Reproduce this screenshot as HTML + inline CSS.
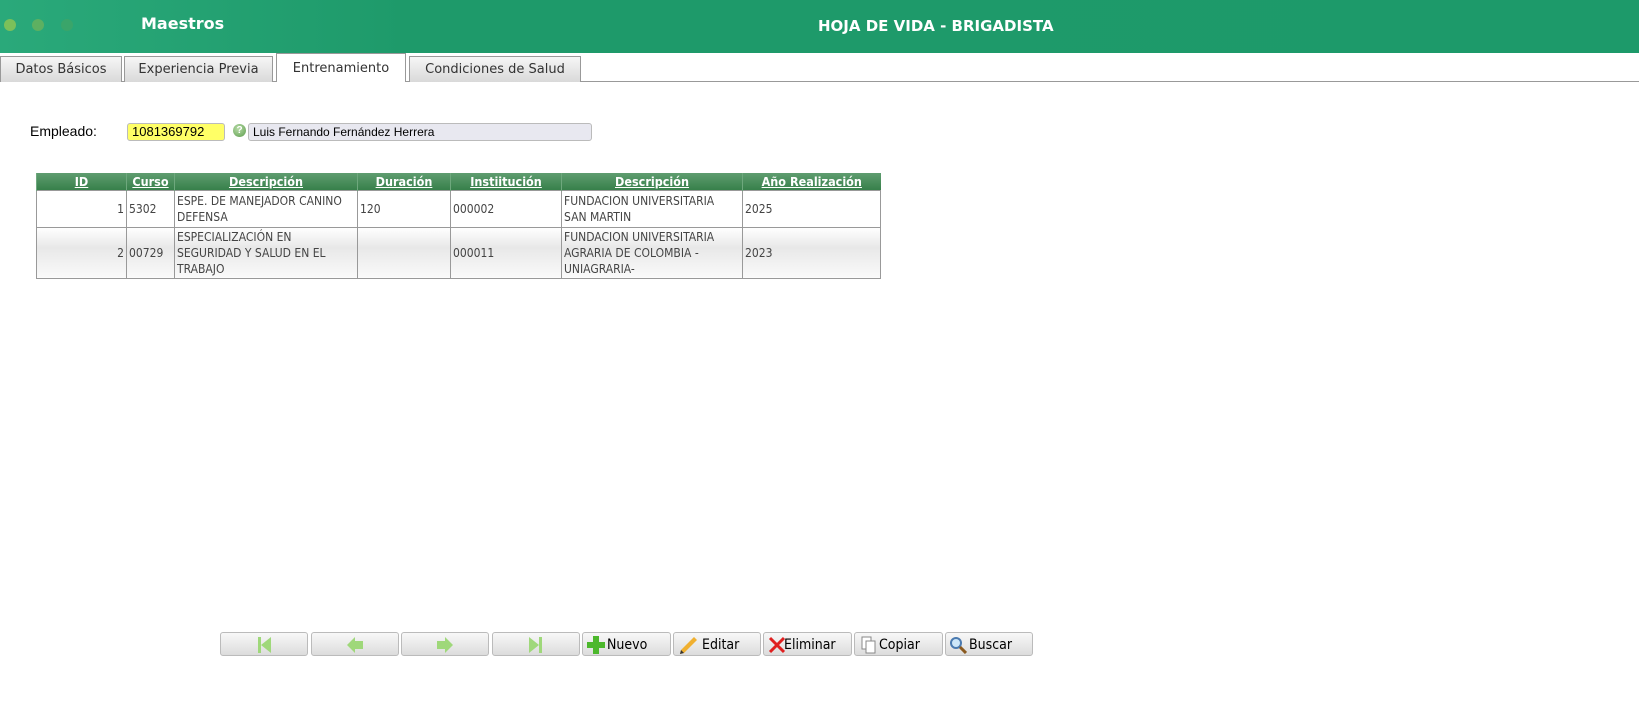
<!DOCTYPE html>
<html><head><meta charset="utf-8"><style>
*{box-sizing:border-box;margin:0;padding:0}
body{width:1639px;height:712px;background:#fff;font-family:"Liberation Sans",sans-serif;position:relative;overflow:hidden}
.hdr{position:absolute;left:0;top:0;width:1639px;height:53px;background:linear-gradient(90deg,#2aa97a 0%,#1e9a6a 25%,#1d9a6a 100%)}
.dot{position:absolute;top:19px;width:12px;height:12px;border-radius:50%}
.hdr .t1{position:absolute;left:141px;top:14px;color:#fff;font-weight:bold;font-size:16px;font-family:"DejaVu Sans",sans-serif}
.hdr .t2{position:absolute;left:818px;top:17px;color:#fff;font-weight:bold;font-size:15px;font-family:"DejaVu Sans",sans-serif}
.tabline{position:absolute;left:0;top:81px;width:1639px;height:1px;background:#999}
.tab{position:absolute;top:56px;height:26px;border:1px solid #999;border-bottom:none;background:linear-gradient(#f6f6f6,#d9d9d9);font-family:"DejaVu Sans",sans-serif;font-size:13px;color:#333;text-align:center;line-height:25px}
.tab.act{top:53px;height:29px;background:#fff;line-height:30px}
.lbl{position:absolute;left:30px;top:123px;font-size:14px}
.inp1{position:absolute;left:127px;top:123px;width:98px;height:18px;background:#ffff66;border:1px solid #bbb;border-radius:3px;font-size:13px;padding-left:4px;line-height:16px}
.q{position:absolute;left:233px;top:124px;width:13px;height:13px;border-radius:50%;background:radial-gradient(circle at 40% 35%,#b8dca8,#5c9c4c);color:#fff;font-size:10px;font-weight:bold;text-align:center;line-height:13px}
.inp2{position:absolute;left:248px;top:123px;width:344px;height:18px;background:#e8e8f0;border:1px solid #bbb;border-radius:3px;font-size:12px;padding-left:4px;line-height:16px}
table{position:absolute;left:36px;top:173px;border-collapse:collapse;font-family:"DejaVu Sans Condensed","DejaVu Sans",sans-serif;font-size:12px;color:#444;table-layout:fixed;width:844px}
th{background:linear-gradient(#5f9d70,#37804a);color:#fff;height:17px;font-weight:bold;text-decoration:underline;font-size:12.5px;border-left:1px solid #6ea87d;padding:0}
td{border:1px solid #999;vertical-align:middle;padding:0 2px;line-height:16px;text-align:left}
tr.r2 td{background:linear-gradient(#fff,#e8e8e8 40%,#fafafa)}
.btn{position:absolute;top:632px;height:24px;border:1px solid #bbb;border-radius:3px;background:linear-gradient(#f8f8f8,#dcdcdc);font-size:14px;font-family:"DejaVu Sans Condensed","DejaVu Sans",sans-serif;line-height:24px;color:#000}
.btn svg{position:absolute;top:3px}
</style></head><body>
<div class="hdr">
<div class="dot" style="left:4px;background:#7bc05a"></div>
<div class="dot" style="left:32px;background:#5db061"></div>
<div class="dot" style="left:61px;background:#3aa56a"></div>
<div class="t1">Maestros</div>
<div class="t2">HOJA DE VIDA - BRIGADISTA</div>
</div>
<div class="tabline"></div>
<div class="tab" style="left:0;width:122px">Datos Básicos</div>
<div class="tab" style="left:124px;width:149px">Experiencia Previa</div>
<div class="tab act" style="left:276px;width:130px">Entrenamiento</div>
<div class="tab" style="left:409px;width:172px">Condiciones de Salud</div>
<div class="lbl">Empleado:</div>
<div class="inp1">1081369792</div>
<div class="q">?</div>
<div class="inp2">Luis Fernando Fernández Herrera</div>
<table>
<colgroup><col style="width:90px"><col style="width:48px"><col style="width:183px"><col style="width:93px"><col style="width:111px"><col style="width:181px"><col style="width:138px"></colgroup>
<tr><th>ID</th><th>Curso</th><th>Descripción</th><th>Duración</th><th>Instiitución</th><th>Descripción</th><th>Año Realización</th></tr>
<tr style="height:37px"><td style="text-align:right">1</td><td>5302</td><td>ESPE. DE MANEJADOR CANINO DEFENSA</td><td>120</td><td>000002</td><td>FUNDACION UNIVERSITARIA<br>SAN MARTIN</td><td>2025</td></tr>
<tr class="r2" style="height:51px"><td style="text-align:right">2</td><td>00729</td><td>ESPECIALIZACIÓN EN<br>SEGURIDAD Y SALUD EN EL<br>TRABAJO</td><td></td><td>000011</td><td>FUNDACION UNIVERSITARIA<br>AGRARIA DE COLOMBIA -<br>UNIAGRARIA-</td><td>2023</td></tr>
</table>
<div class="btn" style="left:220px;width:88px"><svg style="left:34px" width="18" height="18"><rect x="3" y="1" width="3" height="16" fill="#9fd87a"/><path d="M16 1L6 9L16 17Z" fill="#9fd87a"/></svg></div>
<div class="btn" style="left:311px;width:88px"><svg style="left:34px" width="18" height="18"><path d="M1 9L9 1V5H17V13H9V17Z" fill="#9fd87a"/></svg></div>
<div class="btn" style="left:401px;width:88px"><svg style="left:34px" width="18" height="18"><path d="M17 9L9 1V5H1V13H9V17Z" fill="#9fd87a"/></svg></div>
<div class="btn" style="left:492px;width:88px"><svg style="left:34px" width="18" height="18"><rect x="12" y="1" width="3" height="16" fill="#9fd87a"/><path d="M2 1L12 9L2 17Z" fill="#9fd87a"/></svg></div>
<div class="btn" style="left:582px;width:89px;padding-left:24px"><svg style="left:4px" width="18" height="18"><path d="M6 0H12V6H18V12H12V18H6V12H0V6H6Z" fill="#4cb82c"/></svg>Nuevo</div>
<div class="btn" style="left:673px;width:88px;padding-left:28px"><svg style="left:5px" width="18" height="18"><path d="M15 1L18 4L5 17L1 18L2 14Z" fill="#f0b030"/><path d="M1 18L2 14L5 17Z" fill="#333"/></svg>Editar</div>
<div class="btn" style="left:763px;width:89px;padding-left:20px"><svg style="left:4px" width="18" height="18"><path d="M2 2L16 16M16 2L2 16" stroke="#e02020" stroke-width="3"/></svg>Eliminar</div>
<div class="btn" style="left:854px;width:89px;padding-left:24px"><svg style="left:5px" width="18" height="18"><rect x="2" y="1" width="9" height="12" fill="#fff" stroke="#888"/><rect x="6" y="5" width="9" height="12" fill="#fff" stroke="#888"/></svg>Copiar</div>
<div class="btn" style="left:945px;width:88px;padding-left:23px"><svg style="left:3px" width="18" height="18"><circle cx="7" cy="7" r="5" fill="#cde6f8" stroke="#4a7ab0" stroke-width="2"/><path d="M11 11L17 17" stroke="#8a5a20" stroke-width="3"/></svg>Buscar</div>
</body></html>
